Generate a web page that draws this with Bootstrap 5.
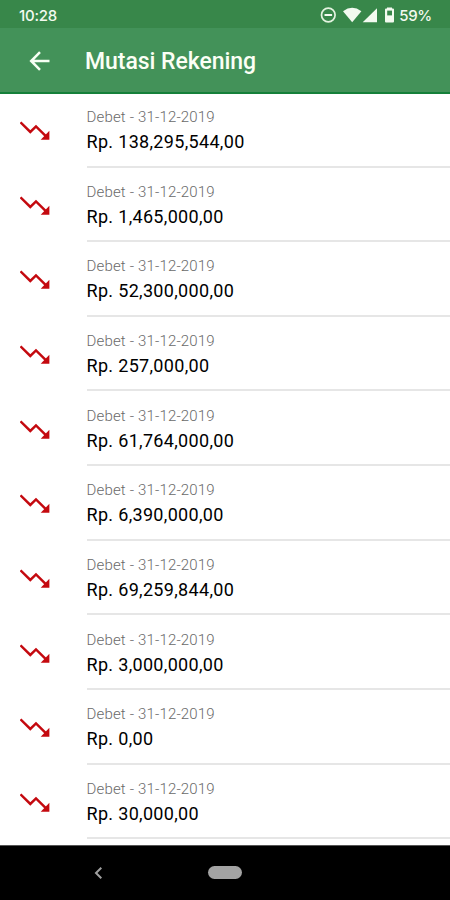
<!DOCTYPE html>
<html lang="id">
<head>
<meta charset="utf-8">
<meta name="viewport" content="width=device-width, initial-scale=1">
<title>Mutasi Rekening</title>
<link href="https://cdn.jsdelivr.net/npm/bootstrap@5.3.0/dist/css/bootstrap.min.css" rel="stylesheet">
<style>
body { font-family: Roboto, "Liberation Sans", sans-serif; background: #fff; }
svg { display: block; flex: none; }
.screen { height: 900px; }
.status-bar { height: 28px; background: #38874a; padding: 2px 18px 0 19px; font: 500 15px/1 Inter, sans-serif; color: #f3faf0; letter-spacing: -.25px; }
.app-bar { height: 66px; background: #439259; border-bottom: 2px solid #15803a; padding: 2px 0 0 29px; }
.app-title { font-size: 23px; font-weight: 500; line-height: 1; margin: 0 0 0 35px; letter-spacing: -.05px; color: #fbfff5; }
.mutations { margin-top: -1.1px; }
.mutation { height: 74.65px; padding-left: 20px; }
.mutation svg { margin: 28.3px 36.5px 0 0; }
.detail { border-bottom: 2px solid #e6e6e6; padding-top: 14.2px; }
.kind { font-size: 15px; line-height: 20px; font-weight: 300; color: #6a6a6a; letter-spacing: .17px; }
.amount { font-size: 18px; line-height: 30px; color: #000; letter-spacing: .32px; }
.nav-keys { height: 55px; background: #000; border-top: 1px solid #555; padding: 0 0 1px 94px; }
.home-pill { width: 34px; height: 13px; background: #a3a3a3; margin-left: 106px; }
</style>
</head>
<body>
<svg class="d-none" aria-hidden="true">
  <symbol id="trend-down" viewBox="0 0 30 20">
    <path d="M.5 1.300 10.300 11 16 5.400 25.600 14.800" fill="none" stroke="#c4090f" stroke-width="2.500"/>
    <path d="M29.400 9.800v8.900h-8.700z" fill="#c4090f"/>
  </symbol>
</svg>
<div class="screen d-flex flex-column overflow-hidden">
  <div class="status-bar d-flex align-items-center justify-content-between">
    <span>10:28</span>
    <div class="d-flex align-items-center">
      <svg width="70" height="18" viewBox="319 5 70 18" fill="#f3faf0">
        <circle cx="333.300" cy="14" r="6.800" fill="none" stroke="#e3f3df" stroke-width="1.700"/>
        <path d="M329.500 13h7.600v2h-7.600z"/>
        <path d="M348 10.200Q357.200 3.500 366.400 10.200L357.200 21.300z"/>
        <path d="M382 7.200V21.300H367.700z"/>
      </svg>
      <svg width="11" height="18" viewBox="384 5 11 18">
        <path d="M387 7.400V6.600h5v.8h1q1 0 1 1v12q0 1-1 1h-7q-1 0-1-1v-12q0-1 1-1z" fill="#f3faf0"/>
        <path d="M387.200 9.600h4.800v4.800h-4.800z" fill="#38874a"/>
      </svg>
      <span class="ps-1">59%</span>
    </div>
  </div>
  <header class="app-bar d-flex align-items-center">
    <svg width="21" height="20" viewBox="0 0 21 20" fill="none" stroke="#f7fff4" stroke-width="2.500"><path d="M20.500 10H2.500M11 1.200 2.200 10 11 18.800"/></svg>
    <h1 class="app-title">Mutasi Rekening</h1>
  </header>
  <main class="mutations flex-fill overflow-hidden">
    <div class="mutation d-flex"><svg width="30" height="20"><use href="#trend-down"/></svg><div class="detail flex-fill"><div class="kind">Debet - 31-12-2019</div><div class="amount">Rp. 138,295,544,00</div></div></div>
    <div class="mutation d-flex"><svg width="30" height="20"><use href="#trend-down"/></svg><div class="detail flex-fill"><div class="kind">Debet - 31-12-2019</div><div class="amount">Rp. 1,465,000,00</div></div></div>
    <div class="mutation d-flex"><svg width="30" height="20"><use href="#trend-down"/></svg><div class="detail flex-fill"><div class="kind">Debet - 31-12-2019</div><div class="amount">Rp. 52,300,000,00</div></div></div>
    <div class="mutation d-flex"><svg width="30" height="20"><use href="#trend-down"/></svg><div class="detail flex-fill"><div class="kind">Debet - 31-12-2019</div><div class="amount">Rp. 257,000,00</div></div></div>
    <div class="mutation d-flex"><svg width="30" height="20"><use href="#trend-down"/></svg><div class="detail flex-fill"><div class="kind">Debet - 31-12-2019</div><div class="amount">Rp. 61,764,000,00</div></div></div>
    <div class="mutation d-flex"><svg width="30" height="20"><use href="#trend-down"/></svg><div class="detail flex-fill"><div class="kind">Debet - 31-12-2019</div><div class="amount">Rp. 6,390,000,00</div></div></div>
    <div class="mutation d-flex"><svg width="30" height="20"><use href="#trend-down"/></svg><div class="detail flex-fill"><div class="kind">Debet - 31-12-2019</div><div class="amount">Rp. 69,259,844,00</div></div></div>
    <div class="mutation d-flex"><svg width="30" height="20"><use href="#trend-down"/></svg><div class="detail flex-fill"><div class="kind">Debet - 31-12-2019</div><div class="amount">Rp. 3,000,000,00</div></div></div>
    <div class="mutation d-flex"><svg width="30" height="20"><use href="#trend-down"/></svg><div class="detail flex-fill"><div class="kind">Debet - 31-12-2019</div><div class="amount">Rp. 0,00</div></div></div>
    <div class="mutation d-flex"><svg width="30" height="20"><use href="#trend-down"/></svg><div class="detail flex-fill"><div class="kind">Debet - 31-12-2019</div><div class="amount">Rp. 30,000,00</div></div></div>
  </main>
  <footer class="nav-keys d-flex align-items-center flex-shrink-0">
    <svg width="8" height="12" viewBox="0 0 8 12" fill="none" stroke="#a0a0a0" stroke-width="2"><path d="M7.300.8 2 6l5.300 5.200"/></svg>
    <div class="home-pill rounded-pill"></div>
  </footer>
</div>
<script src="https://cdn.jsdelivr.net/npm/bootstrap@5.3.0/dist/js/bootstrap.bundle.min.js"></script>
</body>
</html>
